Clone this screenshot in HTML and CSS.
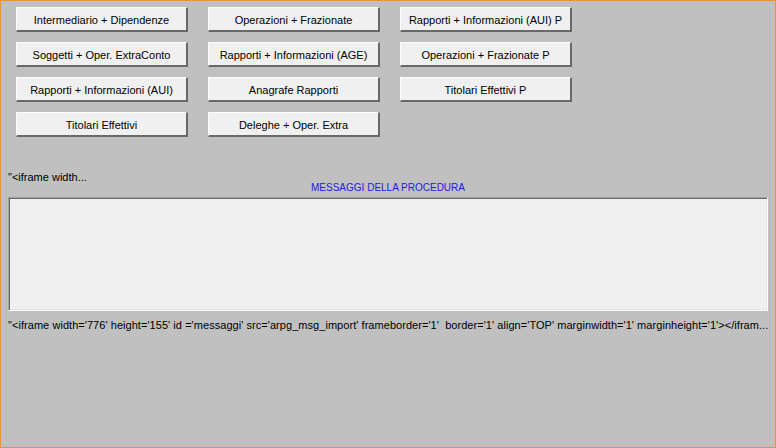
FILE: index.html
```
<!DOCTYPE html>
<html>
<head>
<meta charset="utf-8">
<link rel="stylesheet" href="styles.css">
</head>
<body>
<div class="frame">
  <div class="buttons">
    <button class="btn">Intermediario + Dipendenze</button>
    <button class="btn">Operazioni + Frazionate</button>
    <button class="btn">Rapporti + Informazioni (AUI) P</button>
    <button class="btn">Soggetti + Oper. ExtraConto</button>
    <button class="btn">Rapporti + Informazioni (AGE)</button>
    <button class="btn">Operazioni + Frazionate P</button>
    <button class="btn">Rapporti + Informazioni (AUI)</button>
    <button class="btn">Anagrafe Rapporti</button>
    <button class="btn">Titolari Effettivi P</button>
    <button class="btn">Titolari Effettivi</button>
    <button class="btn">Deleghe + Oper. Extra</button>
  </div>
  <div class="raw short">"&lt;iframe width...</div>
  <div class="title">MESSAGGI DELLA PROCEDURA</div>
  <div class="msgbox"></div>
  <div class="raw long">"&lt;iframe width='776' height='155' id ='messaggi' src='arpg_msg_import' frameborder='1'&nbsp; border='1' align='TOP' marginwidth='1' marginheight='1'&gt;&lt;/ifram...</div>
</div>
</body>
</html>
```
FILE: styles.css
```
html, body {
  margin: 0;
  padding: 0;
}
body {
  width: 776px;
  height: 448px;
  overflow: hidden;
  background: #c0c0c0;
}
.frame {
  box-sizing: border-box;
  width: 776px;
  height: 448px;
  border: 1px solid #e8943f;
  background: #c0c0c0;
  font-family: "Liberation Sans", Arial, sans-serif;
  font-size: 11px;
  color: #000;
  padding: 6px 7px 0 7px;
}
.buttons {
  display: grid;
  grid-template-columns: repeat(3, 172px);
  grid-auto-rows: 25px;
  column-gap: 20px;
  row-gap: 10px;
  padding-left: 8px;
}
.btn {
  box-sizing: border-box;
  margin: 0;
  padding: 1px 0 0 0;
  height: 25px;
  width: 172px;
  background: #f0f0f0;
  border-style: solid;
  border-width: 1px 2px 2px 1px;
  border-color: #ffffff #696969 #696969 #ffffff;
  font-family: inherit;
  font-size: 11px;
  color: #000;
  text-align: center;
  white-space: nowrap;
}
.raw {
  white-space: nowrap;
  overflow: hidden;
  line-height: 13px;
}
.short {
  margin-top: 34px;
}
.title {
  text-align: center;
  color: #2020dd;
  font-size: 10px;
  line-height: 13px;
  margin-top: -3px;
}
.msgbox {
  box-sizing: border-box;
  margin-top: 3px;
  height: 114px;
  width: 760px;
  background: #f0f0f0;
  border: 1px solid;
  border-color: #a0a0a0 #ffffff #ffffff #a0a0a0;
  box-shadow: inset 1px 1px 0 #696969, inset -1px -1px 0 #e3e3e3;
}
.long {
  margin-top: 8px;
  width: 762px;
  letter-spacing: 0.05px;
}
```
